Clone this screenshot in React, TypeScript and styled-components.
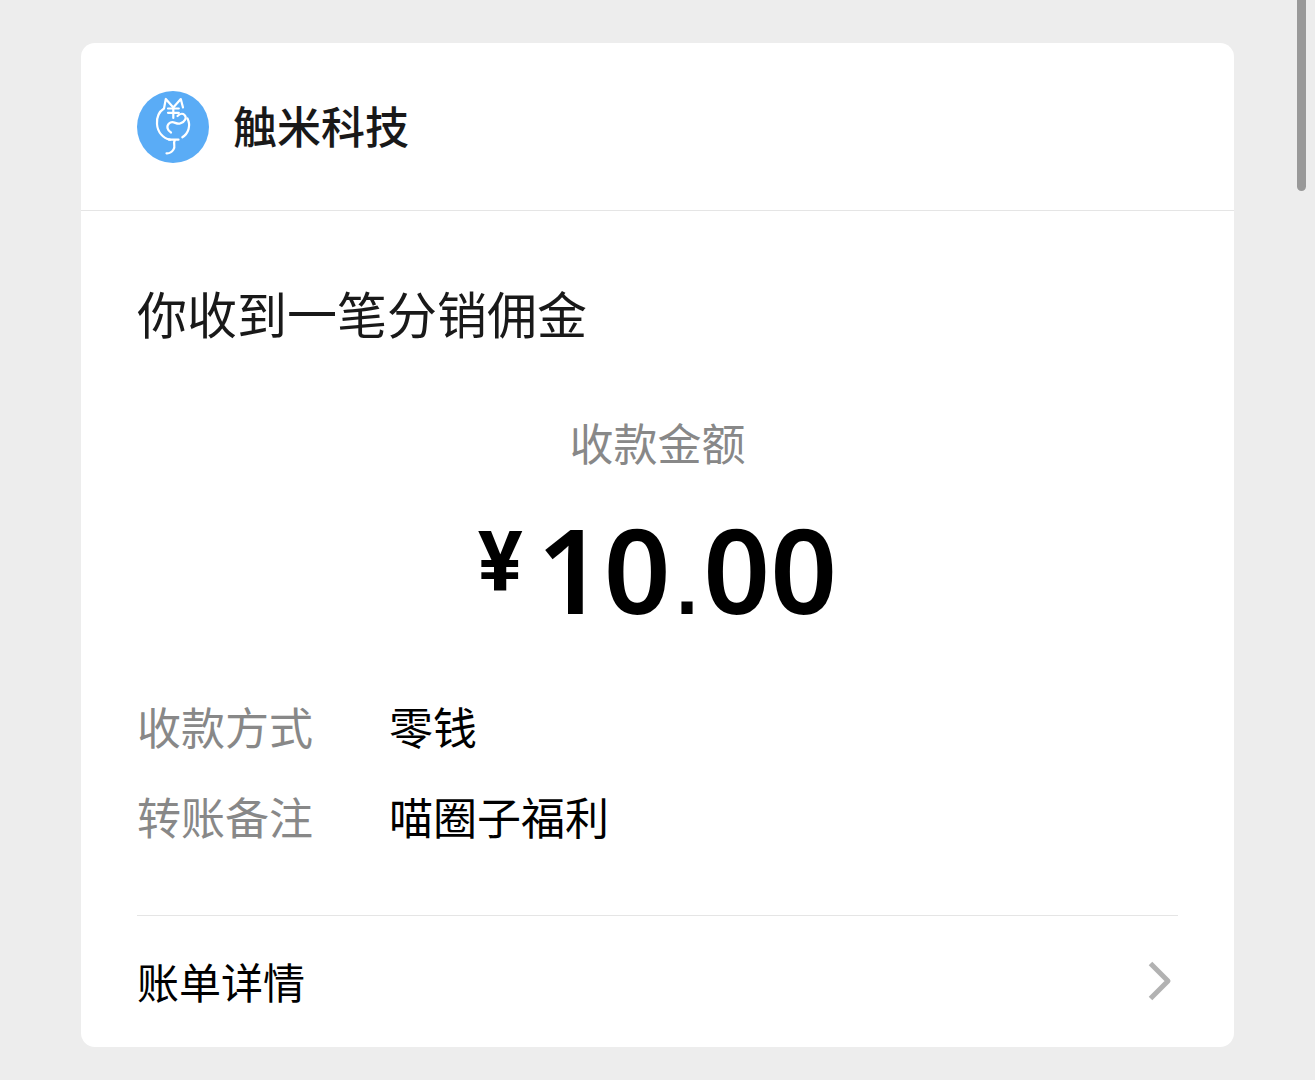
import React from 'react';
import styled, { createGlobalStyle } from 'styled-components';

const GlobalStyle = createGlobalStyle`
  * { box-sizing: border-box; }
  body {
    margin: 0;
    background: #ededed;
    color: #000;
    font-family: "Noto Sans CJK SC", "Noto Sans", sans-serif;
  }
`;

const Page = styled.main`
  position: relative;
  min-height: 100vh;
  padding: 43px 81px 33px;
`;

const ScrollThumb = styled.div`
  position: absolute;
  top: 0;
  right: 9px;
  width: 9px;
  height: 191px;
  border-radius: 0 0 5px 5px;
  background: #999;
`;

const Card = styled.article`
  border-radius: 14px;
  background: #fff;
`;

const Header = styled.header`
  display: flex;
  align-items: flex-start;
  gap: 24px;
  padding: 48px 56px 47px;
  border-bottom: 1px solid #e5e5e5;
`;

const Logo = styled.svg`
  display: block;
  width: 72px;
  height: 72px;
`;

const Name = styled.h1`
  margin: 0;
  color: #191919;
  font-size: 44px;
  font-weight: 500;
  line-height: 68px;
`;

const Body = styled.section`
  padding: 66px 56px 0;
`;

const Title = styled.h2`
  margin: 0;
  color: #191919;
  font-size: 50px;
  font-weight: 400;
  line-height: 70px;
`;

const AmountBlock = styled.div`
  display: flex;
  flex-direction: column;
  align-items: center;
  gap: 42px;
  margin-top: 65px;
`;

const AmountLabel = styled.div`
  color: #888;
  font-size: 44px;
  line-height: 60px;
`;

const Amount = styled.div`
  display: flex;
  align-items: flex-start;
  gap: 14px;
`;

const Currency = styled.span`
  font-family: Roboto, sans-serif;
  font-size: 84px;
  font-weight: 700;
  line-height: 98px;
`;

const Digits = styled.span`
  font-family: "Noto Sans", sans-serif;
  font-size: 117px;
  font-weight: 600;
  line-height: 110px;
`;

const Point = styled.span`
  font-family: "Liberation Sans", sans-serif;
  font-weight: 400;
  line-height: 0;
`;

const Details = styled.dl`
  display: grid;
  grid-template-columns: max-content 1fr;
  gap: 30px 76px;
  margin: 72px 0 69px;
  font-size: 44px;
  line-height: 60px;
`;

const Term = styled.dt`
  color: #888;
`;

const Value = styled.dd`
  margin: 0;
`;

const BillLink = styled.a`
  display: flex;
  align-items: center;
  justify-content: space-between;
  margin: 0 56px;
  padding: 34px 6px 36px 0;
  border-top: 1px solid #e5e5e5;
  color: #000;
  font-size: 42px;
  line-height: 61px;
  text-decoration: none;
`;

const Chevron = styled.svg`
  display: block;
  width: 24px;
  height: 40px;
`;

const details = [
  { term: '收款方式', value: '零钱' },
  { term: '转账备注', value: '喵圈子福利' },
];

function CatLogo() {
  return (
    <Logo viewBox="0 0 72 72" aria-hidden="true">
      <circle cx="36" cy="36" r="36" fill="#5aacf6" />
      <g fill="none" stroke="#fff" strokeWidth="2.2" strokeLinecap="round" strokeLinejoin="round">
        <path d="M46 16.500 43.800 8 36.300 16.500 28.800 8 27 17.500C21.500 21 19.500 26 20 33C20.500 41 26 47.500 33 48.700" />
        <path d="M31 17.500H41.800M31 21.800H41.800M36.300 16.500V27" />
        <path d="M34 41.500C30.500 39.500 29 35.500 32 32.500C36 28.500 39 34 43 32.500C48.500 30.500 50 26.500 47.500 24C45.500 22 42.500 23 40.500 25" />
        <path d="M50.500 27.500C54 34.500 51.500 42.500 45.300 46.300" />
        <path d="M32 48.700H41.500M38 49C35.500 52 39 55.500 36.500 58.500C34.500 61.500 32 62.500 29.500 62.300" />
      </g>
    </Logo>
  );
}

export default function App() {
  return (
    <>
      <GlobalStyle />
      <Page>
        <Card>
          <Header>
            <CatLogo />
            <Name>触米科技</Name>
          </Header>
          <Body>
            <Title>你收到一笔分销佣金</Title>
            <AmountBlock>
              <AmountLabel>收款金额</AmountLabel>
              <Amount>
                <Currency>¥</Currency>
                <Digits>10<Point>.</Point>00</Digits>
              </Amount>
            </AmountBlock>
            <Details>
              {details.map(({ term, value }) => (
                <React.Fragment key={term}>
                  <Term>{term}</Term>
                  <Value>{value}</Value>
                </React.Fragment>
              ))}
            </Details>
          </Body>
          <BillLink href="#bill">
            账单详情
            <Chevron viewBox="0 0 24 40" aria-hidden="true">
              <path d="M2.500 2.500 20 20 2.500 37.500" fill="none" stroke="#b2b2b2" strokeWidth="5" strokeLinejoin="round" />
            </Chevron>
          </BillLink>
        </Card>
        <ScrollThumb />
      </Page>
    </>
  );
}
